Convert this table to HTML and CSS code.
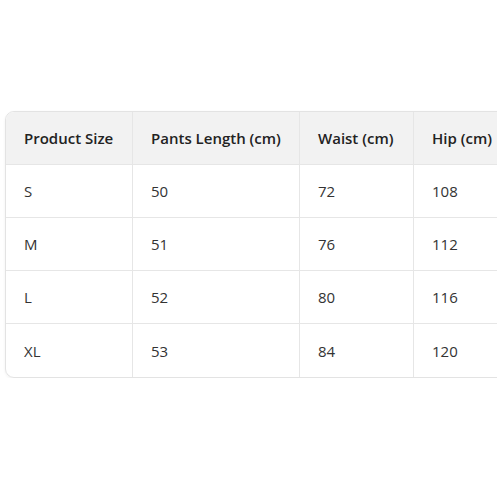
FILE: index.html
```html
<!DOCTYPE html>
<html>
<head>
<meta charset="utf-8">
<link rel="stylesheet" href="styles.css">
</head>
<body>
<div class="wrap">
<table class="size-table">
  <colgroup>
    <col class="c1"><col class="c2"><col class="c3"><col class="c4">
  </colgroup>
  <thead>
    <tr><th>Product Size</th><th>Pants Length (cm)</th><th>Waist (cm)</th><th>Hip (cm)</th></tr>
  </thead>
  <tbody>
    <tr><td>S</td><td>50</td><td>72</td><td>108</td></tr>
    <tr><td>M</td><td>51</td><td>76</td><td>112</td></tr>
    <tr><td>L</td><td>52</td><td>80</td><td>116</td></tr>
    <tr><td>XL</td><td>53</td><td>84</td><td>120</td></tr>
  </tbody>
</table>
</div>
</body>
</html>
```
FILE: styles.css
```css
html, body {
  margin: 0;
  padding: 0;
  background: #fff;
  overflow: hidden;
}
.wrap {
  padding: 111px 0 0 5px;
  width: 492px;
  overflow: hidden;
}
.size-table {
  border-collapse: separate;
  border-spacing: 0;
  border: 1px solid #e3e3e3;
  border-radius: 9px;
  font-family: "Open Sans", "Noto Sans", sans-serif;
  font-size: 15px;
  color: #333;
  table-layout: fixed;
  width: 610px;
  box-shadow: 0 1px 3px rgba(0,0,0,0.06);
  overflow: hidden;
}
.c1 { width: 127px; }
.c2 { width: 167px; }
.c3 { width: 114px; }
.c4 { width: 202px; }
.size-table th, .size-table td {
  text-align: left;
  padding: 0 18px;
  height: 53px;
  border-bottom: 1px solid #e6e6e6;
  border-right: 1px solid #e6e6e6;
  white-space: nowrap;
  box-sizing: border-box;
}
.size-table th {
  background: #f2f2f2;
  font-weight: 600;
  color: #222;
}
.size-table tbody tr:last-child td {
  border-bottom: none;
}
.size-table th:first-child { border-top-left-radius: 8px; }
```
